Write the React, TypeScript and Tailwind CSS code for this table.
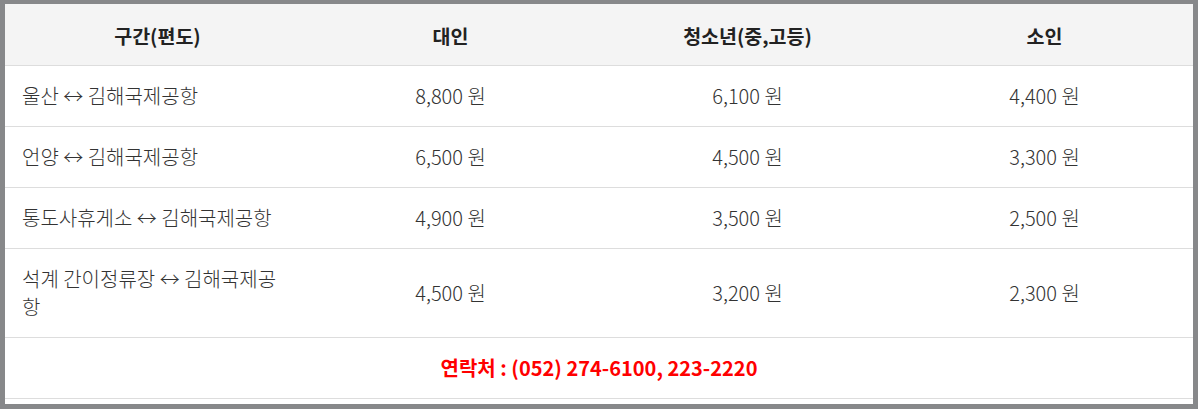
const rows = [
  { route: '울산 ↔ 김해국제공항', adult: '8,800 원', youth: '6,100 원', child: '4,400 원' },
  { route: '언양 ↔ 김해국제공항', adult: '6,500 원', youth: '4,500 원', child: '3,300 원' },
  { route: '통도사휴게소 ↔ 김해국제공항', adult: '4,900 원', youth: '3,500 원', child: '2,500 원' },
  { route: '석계 간이정류장 ↔ 김해국제공항', adult: '4,500 원', youth: '3,200 원', child: '2,300 원' },
];

export default function App() {
  return (
    <div
      className="w-[1198px] bg-white border-[5px] border-t-4 border-[#87888a] pb-[5px]"
      style={{ fontFamily: '"Noto Sans CJK KR", "Noto Sans", sans-serif' }}
    >
      <table className="w-full table-fixed border-collapse">
        <thead>
          <tr className="bg-[#f4f4f4] border-b border-[#dddddd]">
            <th className="w-1/4 h-[61px] pt-[2px] pl-[8px] text-[19.5px] font-bold text-[#222] text-center">구간(편도)</th>
            <th className="w-1/4 pt-[2px] text-[19.5px] font-bold text-[#222] text-center">대인</th>
            <th className="w-1/4 pt-[2px] text-[19.5px] font-bold text-[#222] text-center">청소년(중,고등)</th>
            <th className="w-1/4 pt-[2px] text-[19.5px] font-bold text-[#222] text-center">소인</th>
          </tr>
        </thead>
        <tbody className="text-[20px] font-light text-[#333] leading-[28px]">
          {rows.map((r) => (
            <tr key={r.route} className="border-b border-[#dddddd]">
              <td className="px-[17px] py-4 text-left">{r.route}</td>
              <td className="py-4 text-center">{r.adult}</td>
              <td className="py-4 text-center">{r.youth}</td>
              <td className="py-4 text-center">{r.child}</td>
            </tr>
          ))}
          <tr className="border-b border-[#dddddd]">
            <td colSpan={4} className="py-4 text-center text-[20px] font-bold text-[#ff0000]">
              연락처 : (052) 274-6100, 223-2220
            </td>
          </tr>
        </tbody>
      </table>
    </div>
  );
}
